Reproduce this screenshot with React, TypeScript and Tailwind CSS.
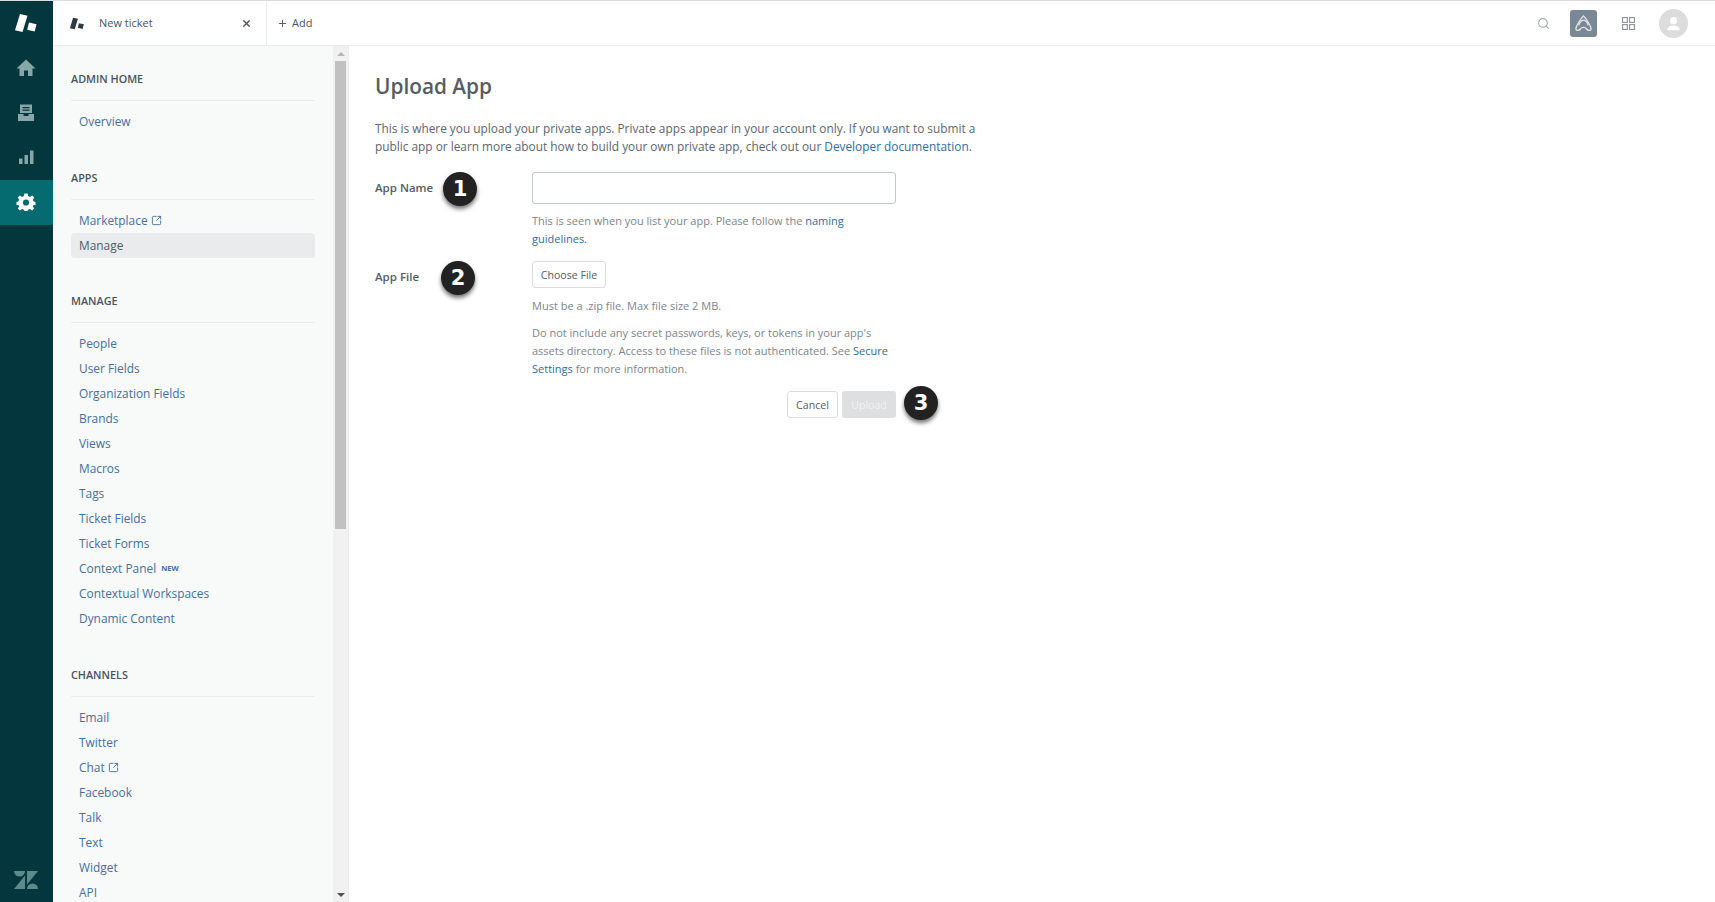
import { SquareArrowOutUpRight, X, Plus, Search } from "lucide-react";

const sections = [
  { title: "ADMIN HOME", items: [{ label: "Overview" }] },
  { title: "APPS", items: [{ label: "Marketplace", ext: true }, { label: "Manage", active: true }] },
  {
    title: "MANAGE",
    items: [
      { label: "People" },
      { label: "User Fields" },
      { label: "Organization Fields" },
      { label: "Brands" },
      { label: "Views" },
      { label: "Macros" },
      { label: "Tags" },
      { label: "Ticket Fields" },
      { label: "Ticket Forms" },
      { label: "Context Panel", badge: "NEW" },
      { label: "Contextual Workspaces" },
      { label: "Dynamic Content" },
    ],
  },
  {
    title: "CHANNELS",
    items: [
      { label: "Email" },
      { label: "Twitter" },
      { label: "Chat", ext: true },
      { label: "Facebook" },
      { label: "Talk" },
      { label: "Text" },
      { label: "Widget" },
      { label: "API" },
    ],
  },
];

type Item = { label: string; ext?: boolean; active?: boolean; badge?: string };

function ProductMark({ className }: { className: string }) {
  return (
    <svg viewBox="0 0 24 20" className={className} fill="currentColor">
      <path d="M6 1l7.5 1.8-5 16.2-7.5-1.8z" />
      <path d="M15 9.5l7.5 1.8-1.8 7.2-7.5-1.8z" />
    </svg>
  );
}

function RailIcon({ d, active }: { d: string; active?: boolean }) {
  return (
    <div className={`flex h-[45px] w-full items-center justify-center pr-[2px] ${active ? "bg-[#056b70] pb-[2px] text-white" : "text-[#86a6a7]"}`}>
      <svg viewBox="0 0 20 20" className="h-5 w-5" fill="currentColor">
        <path d={d} fillRule="evenodd" />
      </svg>
    </div>
  );
}

function Step({ n }: { n: number }) {
  return (
    <span className="flex h-[34px] w-[34px] shrink-0 items-center justify-center rounded-full bg-[#222222] text-[21px] font-extrabold leading-none text-white shadow-[0_3px_4px_rgba(0,0,0,0.55)] font-['DejaVu_Sans',sans-serif]">
      {n}
    </span>
  );
}

function NavRow({ item }: { item: Item }) {
  return (
    <div className={`flex h-[25px] items-center gap-[3px] rounded-sm pl-[8px] text-[11.9px] ${item.active ? "bg-[#e9ebed] text-[#555d63]" : "text-[#44709f]"}`}>
      <span>{item.label}</span>
      {item.ext && <SquareArrowOutUpRight className="h-[11px] w-[11px]" strokeWidth={2} />}
      {item.badge && <span className="ml-[2px] text-[7.5px] font-bold">{item.badge}</span>}
    </div>
  );
}

export default function App() {
  return (
    <div className="flex h-[902px] w-[1715px] flex-col overflow-hidden border-t border-[#d8dcde] bg-white font-['Open_Sans',sans-serif] text-[#68737d]">
      <div className="flex min-h-0 flex-1">
        <div className="flex w-[53px] shrink-0 flex-col items-center bg-[#03363d]">
          <div className="flex h-[44px] w-full items-center justify-center pr-[2px] text-white">
            <ProductMark className="h-[20px] w-[24px]" />
          </div>
          <RailIcon d="M10 1.5L0.5 10.5H3.5V18H8V12.5H12V18H16.5V10.5H19.5Z" />
          <RailIcon d="M4 1.5H16V10H4ZM6.5 4V5.2H13.5V4ZM6.5 6.6V7.8H13.5V6.6ZM2 11H7.5V13H12.5V11H18V18H2Z" />
          <RailIcon d="M3 10.5H6.5V16H3ZM8.5 7H12V16H8.5ZM14 2.5H17.5V16H14Z" />
          <RailIcon
            active
            d="M8.4 1.5H11.6L12.1 4.1L13.9 4.9L16.1 3.4L18.3 5.6L16.8 7.8L17.6 9.6L19.5 10V13H17.6L16.8 14.4L18.1 16.4L16.1 18.4L13.9 16.9L12.1 17.7L11.6 19H8.4L7.9 17.7L6.1 16.9L3.9 18.4L1.9 16.4L3.2 14.4L2.4 13H0.5V10L2.4 9.6L3.2 7.8L1.7 5.6L3.9 3.4L6.1 4.9L7.9 4.1ZM10 7.4A3 3 0 1 0 10 13.6A3 3 0 1 0 10 7.4Z"
          />
          <div className="mt-auto flex h-[45px] w-full items-center justify-center pr-[2px] text-[#5f8a8b]">
            <svg viewBox="0 0 24 18" className="h-[18px] w-[24px]" fill="currentColor">
              <path d="M11 4.5V18H0Z" />
              <path d="M11 0A5.5 5.5 0 0 1 0 0Z" />
              <path d="M13 13.5V0H24Z" />
              <path d="M13 18A5.5 5.5 0 0 1 24 18Z" />
            </svg>
          </div>
        </div>

        <div className="flex min-w-0 flex-1 flex-col">
          <div className="flex h-[45px] shrink-0 items-stretch border-b border-[#e9ebed]">
            <div className="flex w-[214px] items-center border-r border-[#e9ebed] pl-4 pr-[14px] text-[11px] text-[#49545c]">
              <ProductMark className="h-[13px] w-[16px] text-[#2f3941]" />
              <span className="ml-[14px]">New ticket</span>
              <X className="ml-auto h-[11px] w-[11px]" strokeWidth={3} />
            </div>
            <div className="flex items-center gap-1 pl-[10px] text-[11px] text-[#49545c]">
              <Plus className="h-[11px] w-[11px]" strokeWidth={2} />
              <span>Add</span>
            </div>
            <div className="ml-auto flex items-center pr-[27px]">
              <Search className="h-[13px] w-[13px] text-[#a0a5a9]" strokeWidth={2} />
              <div className="ml-[20px] flex h-[27px] w-[27px] items-center justify-center rounded-[3px] bg-[#7a8794]">
                <svg viewBox="0 0 20 20" className="h-[19px] w-[19px] text-[#e4e8eb]" fill="none" stroke="currentColor" strokeWidth="1.4">
                  <path d="M10 2C7 5 2 13 2 15.5C2 17.5 5 18 7 15.5C8.5 13.5 11.5 13.5 13 15.5C15 18 18 17.5 18 15.5C18 13 13 5 10 2Z" />
                  <path d="M5 12C6 8 9 6.5 10 6.5C11 6.5 14 8 15 12" />
                </svg>
              </div>
              <svg viewBox="0 0 14 14" className="ml-[25px] h-[13px] w-[13px] text-[#8c9299]" fill="none" stroke="currentColor" strokeWidth="1.2">
                <rect x="0.6" y="0.6" width="5.2" height="5.2" />
                <rect x="8.2" y="0.6" width="5.2" height="5.2" />
                <rect x="0.6" y="8.2" width="5.2" height="5.2" />
                <rect x="8.2" y="8.2" width="5.2" height="5.2" />
              </svg>
              <div className="ml-[24px] flex h-[29px] w-[29px] items-center justify-center rounded-full bg-[#dcdcdc] text-white">
                <svg viewBox="0 0 20 20" className="h-[19px] w-[19px]" fill="currentColor">
                  <circle cx="10" cy="7" r="3.8" />
                  <path d="M3.5 17C3.5 13.5 6.5 12.2 10 12.2C13.5 12.2 16.5 13.5 16.5 17Z" />
                </svg>
              </div>
            </div>
          </div>

          <div className="flex min-h-0 flex-1">
            <div className="flex w-[296px] shrink-0 border-r border-[#e9ebed]">
              <div className="flex min-w-0 flex-1 flex-col gap-[32px] overflow-hidden bg-[#f8f9f9] pl-[18px] pr-[18px] pt-[22px]">
                {sections.map((section) => (
                  <div key={section.title}>
                    <div className="h-[22px] text-[10.8px] font-semibold leading-[22px] text-[#49545c]">{section.title}</div>
                    <div className="mt-[10px] mb-[8.5px] h-px bg-[#e9ebed]" />
                    {section.items.map((item) => (
                      <NavRow key={item.label} item={item} />
                    ))}
                  </div>
                ))}
              </div>
              <div className="flex w-[15px] shrink-0 flex-col items-center bg-[#f1f1f1] px-[2px]">
                <div className="mt-[6px] h-0 w-0 border-x-[4px] border-b-[4px] border-x-transparent border-b-[#b5b5b5]" />
                <div className="mt-[5px] h-[468px] w-full bg-[#c1c1c1]" />
                <div className="mb-[5px] mt-auto h-0 w-0 border-x-[4px] border-t-[4px] border-x-transparent border-t-[#505050]" />
              </div>
            </div>

            <main className="min-w-0 flex-1 pl-[26px] pt-[24px]">
              <h1 className="text-[20.8px] font-semibold leading-[32px] text-[#555d63]">Upload App</h1>
              <p className="mt-[17px] w-[610px] text-[11.85px] leading-[18px] text-[#5c6670]">
                This is where you upload your private apps. Private apps appear in your account only. If you want to submit a public app or learn more about how to build your own private app, check out our{" "}
                <a className="text-[#2f6da0]">Developer documentation.</a>
              </p>

              <div className="mt-[17px] flex">
                <div className="flex h-[32px] w-[157px] shrink-0 items-center text-[11.5px] font-semibold text-[#555d63]">
                  <span className="w-[68px]">App Name</span>
                  <div className="pt-[2px]">
                    <Step n={1} />
                  </div>
                </div>
                <div className="w-[364px] text-[#7b858d]">
                  <div className="h-[32px] rounded-[3px] border border-[#c2c8cc] bg-white" />
                  <p className="mt-[8px] text-[11px] leading-[18px]">
                    This is seen when you list your app. Please follow the <a className="text-[#2f6da0]">naming guidelines.</a>
                  </p>
                </div>
              </div>

              <div className="mt-[13px] flex">
                <div className="flex h-[32px] w-[157px] shrink-0 items-center text-[11.5px] font-semibold text-[#555d63]">
                  <span className="w-[66px]">App File</span>
                  <div className="pt-[2px]">
                    <Step n={2} />
                  </div>
                </div>
                <div className="w-[364px] text-[11px] leading-[18px] text-[#7b858d]">
                  <button className="flex h-[27px] w-[74px] items-center justify-center rounded-[3px] border border-[#d8dcde] bg-white text-[10.6px] text-[#555d63]">Choose File</button>
                  <p className="mt-[9px]">Must be a .zip file. Max file size 2 MB.</p>
                  <p className="mt-[9px]">
                    Do not include any secret passwords, keys, or tokens in your app's assets directory. Access to these files is not authenticated. See <a className="text-[#2f6da0]">Secure Settings</a> for more information.
                  </p>
                  <div className="relative mt-[13px] flex justify-end gap-1">
                    <button className="flex h-[27px] w-[51px] items-center justify-center rounded-[3px] border border-[#d8dcde] bg-white text-[10.6px] text-[#555d63]">Cancel</button>
                    <button className="flex h-[27px] w-[54px] items-center justify-center rounded-[3px] bg-[#dddfe0] text-[10.6px] text-[#f2f3f3]">Upload</button>
                    <div className="absolute left-[372px] top-[-5px]">
                      <Step n={3} />
                    </div>
                  </div>
                </div>
              </div>
            </main>
          </div>
        </div>
      </div>
    </div>
  );
}
